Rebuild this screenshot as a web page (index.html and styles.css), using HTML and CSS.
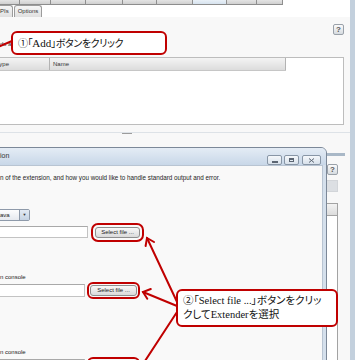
FILE: index.html
```html
<!DOCTYPE html>
<html lang="ja">
<head>
  <meta charset="UTF-8">
  <title>Extender</title>
  <link rel="stylesheet" href="styles.css">
</head>
<body>
  <div class="win">
    <div class="main">
      <div class="tabs-top">
        <span></span><span></span><span></span><span></span><span></span>
        <span></span><span class="on"></span><span></span><span></span>
      </div>
      <div class="tabs-sub">
        <span class="tab first">APIs</span>
        <span class="tab">Options</span>
      </div>
      <div class="rule"></div>
      <div class="panel">
        <div class="help-row"><span class="help">?</span></div>
        <div class="intro">ds a</div>
        <div class="table">
          <div class="thead">
            <div class="th type">Type</div>
            <div class="th name">Name</div>
          </div>
        </div>
        <div class="splitter"><span class="grip"></span></div>
        <div class="lower">
          <div class="rule2"></div>
          <div class="side">
            <span class="help">?</span>
            <span class="sbtn"></span>
            <div class="slist"><div class="slist-head"></div></div>
          </div>
        </div>
      </div>
    </div>
    <div class="stripe"></div>
  </div>

  <div class="dialog">
    <div class="titlebar">
      <span class="title">ion</span>
      <div class="wbtns">
        <span class="wbtn"><i class="ico-min"></i></span>
        <span class="wbtn"><i class="ico-max"></i></span>
        <span class="wbtn wide">
          <svg width="7" height="5" viewBox="0 0 7 5"><path d="M1 0.5 L6 4.5 M6 0.5 L1 4.5" stroke="#5c6673" stroke-width="1"/></svg>
        </span>
      </div>
    </div>
    <div class="content">
      <div class="desc">n of the extension, and how you would like to handle standard output and error.</div>
      <div class="combo"><span class="combo-text">Java</span><span class="combo-arrow">▼</span></div>
      <div class="row r1">
        <span class="field"></span>
        <button class="sel hl">Select file ...</button>
      </div>
      <div class="label l1">n console</div>
      <div class="row r2">
        <span class="field"></span>
        <button class="sel hl">Select file ...</button>
      </div>
      <div class="label l2">n console</div>
      <div class="row r2 r3">
        <span class="field"></span>
        <button class="sel hl">Select file ...</button>
      </div>
    </div>
  </div>

  <svg class="arrows" width="360" height="360" viewBox="0 0 360 360">
    <g stroke="#c00000" stroke-width="2" fill="none" stroke-linecap="round">
      <path d="M12 41 L-2 47"/>
      <path d="M178 304 L147 238"/>
      <path d="M145.6 246 L147 238 L154 242"/>
      <path d="M177 306 L143 292"/>
      <path d="M147.3 298.7 L143 292 L150.8 289"/>
      <path d="M177 312 L143 364"/>
    </g>
  </svg>

  <div class="callout c1">①「<span class="lat">Add</span>」ボタンをクリック</div>
  <div class="callout c2">②「Select file ...」ボタンをクリッ<br>クしてExtenderを選択</div>
</body>
</html>
```

FILE: styles.css
```css
body {
  margin: 0;
  width: 360px;
  height: 360px;
  overflow: hidden;
  position: relative;
  background: #fff;
  font-family: "Liberation Sans", Arial, sans-serif;
  font-size: 6px;
  color: #222;
}
.win {
  display: flex;
  height: 360px;
}
.main {
  width: 350px;
  display: flex;
  flex-direction: column;
}
.stripe {
  width: 5px;
  background: #c3d0dd;
}

/* top tab strip, only its lower edge shows */
.tabs-top {
  display: flex;
  height: 5px;
}
.tabs-top span {
  box-sizing: border-box;
  height: 5px;
  border-right: 1px solid #8f8f8f;
  border-bottom: 1px solid #8d8d8d;
  background: linear-gradient(#e4e4e4, #d0d0d0);
}
.tabs-top span:nth-child(1) { width: 20px; }
.tabs-top span:nth-child(2) { width: 31px; }
.tabs-top span:nth-child(3) { width: 35px; }
.tabs-top span:nth-child(4) { width: 37px; }
.tabs-top span:nth-child(5) { width: 34px; }
.tabs-top span:nth-child(6) { width: 36px; }
.tabs-top span:nth-child(7) { width: 34px; }
.tabs-top span:nth-child(8) { width: 30px; }
.tabs-top span:nth-child(9) { width: 26px; }
.tabs-top span.on {
  background: linear-gradient(#e9f0f7, #d6e2ee);
}

.tabs-sub {
  height: 14px;
  display: flex;
  align-items: flex-end;
  gap: 1px;
}
.tab {
  height: 12px;
  box-sizing: border-box;
  padding: 0 3px;
  line-height: 11px;
  border: 1px solid #9c9c9c;
  border-bottom: none;
  border-radius: 3px 3px 0 0;
  background: linear-gradient(#f6f6f6, #e0e0e0);
  color: #333;
}
.tab.first {
  margin-left: -8px;
}
.rule {
  height: 3px;
  background: #7f8d9c;
}

.panel {
  flex: 1;
  background: #f8f8f8;
  display: flex;
  flex-direction: column;
}
.help-row {
  display: flex;
  justify-content: flex-end;
  padding: 7px 6px 0 0;
}
.help {
  width: 11px;
  height: 11px;
  box-sizing: border-box;
  border: 1px solid #9aa1a9;
  border-radius: 2px;
  background: linear-gradient(#fbfbfb, #d6dbe0);
  color: #555;
  font-size: 8px;
  font-weight: bold;
  line-height: 9px;
  text-align: center;
}
.intro {
  margin-top: 6px;
  height: 6px;
  line-height: 6px;
  color: #333;
}
.table {
  margin: 10px 6px 0 -10px;
  height: 68px;
  box-sizing: border-box;
  border: 1px solid #bdbdbd;
  background: #fff;
}
.thead {
  display: flex;
  width: 295px;
  height: 12px;
  border-bottom: 1px solid #c6c6c6;
}
.th {
  box-sizing: border-box;
  line-height: 12px;
  border-right: 1px solid #b3b3b3;
  background: linear-gradient(#f4f4f4, #dcdcdc);
  color: #333;
}
.th.type {
  width: 59px;
  padding-left: 5px;
}
.th.name {
  flex: 1;
  padding-left: 3px;
}
.splitter {
  height: 16px;
  display: flex;
  align-items: center;
  padding-left: 122px;
  background: linear-gradient(transparent 7px, #dde2e7 7px, #dde2e7 8px, transparent 8px);
}
.grip {
  width: 10px;
  height: 1px;
  background: #9c9c9c;
}
.lower {
  flex: 1;
  display: flex;
  flex-direction: column;
}
.rule2 {
  margin: 12px 5px 0 0;
  height: 3px;
  background: #a9b8c7;
}
.side {
  display: flex;
  flex-direction: column;
  align-items: flex-end;
  padding-right: 12px;
}
.side .help {
  margin-top: 8px;
}
.sbtn {
  margin-top: 5px;
  width: 30px;
  height: 12px;
  box-sizing: border-box;
  border: 1px solid #d2d5d9;
  background: #dcdfe3;
}
.slist {
  margin-top: 11px;
  width: 40px;
  height: 160px;
  box-sizing: border-box;
  border: 1px solid #a3a3a3;
  background: #fff;
}
.slist-head {
  height: 11px;
  border-bottom: 1px solid #a3a3a3;
  background: linear-gradient(#f3f3f3, #dcdcdc);
}

/* dialog window over the main window */
.dialog {
  position: absolute;
  left: -40px;
  top: 147px;
  width: 367px;
  height: 240px;
  box-sizing: border-box;
  border: 1px solid #7c8898;
  border-radius: 6px 6px 0 0;
  background: #d5e0ec;
  padding: 0 3px;
  display: flex;
  flex-direction: column;
}
.titlebar {
  height: 17px;
  margin: 0 -3px;
  padding: 0 5px 0 39px;
  display: flex;
  border-radius: 5px 5px 0 0;
  background: linear-gradient(#e4ecf5, #c8d7e8);
}
.title {
  margin-top: 3px;
  font-size: 7px;
  line-height: 9px;
  color: #333;
}
.wbtns {
  margin-left: auto;
  margin-top: 7px;
  display: flex;
  gap: 2px;
}
.wbtn {
  width: 15px;
  height: 10px;
  box-sizing: border-box;
  border: 1px solid #8896a6;
  border-radius: 2px;
  background: linear-gradient(#f5f8fb, #d8e1eb);
  display: flex;
  align-items: center;
  justify-content: center;
}
.wbtn.wide {
  width: 19px;
  margin-left: 1px;
}
.ico-min {
  width: 6px;
  height: 2px;
  margin-top: 3px;
  background: #5c6673;
}
.ico-max {
  width: 5px;
  height: 4px;
  box-sizing: border-box;
  border: 1px solid #5c6673;
  border-top-width: 2px;
}
.content {
  flex: 1;
  background: #f9f9f9;
  border: 1px solid #b8c4d2;
  padding: 8px 0 0 35px;
}
.desc {
  font-size: 6.3px;
  line-height: 7px;
  white-space: nowrap;
  color: #222;
}
.combo {
  margin: 28px 0 0 -20px;
  width: 50px;
  height: 12px;
  box-sizing: border-box;
  display: flex;
  border: 1px solid #8e9aaa;
  border-radius: 2px;
  background: linear-gradient(#fdfdfd, #e6e9ee);
}
.combo-text {
  flex: 1;
  padding-left: 16px;
  line-height: 10px;
}
.combo-arrow {
  width: 9px;
  border-left: 1px solid #8e9aaa;
  background: linear-gradient(#e3ebf4, #c5d3e3);
  font-size: 4px;
  line-height: 10px;
  text-align: center;
  color: #333;
}
.row {
  display: flex;
  align-items: center;
  margin-left: -20px;
}
.field {
  box-sizing: border-box;
  height: 12px;
  border: 1px solid #c3c3c3;
  border-top-color: #a9a9a9;
  background: #fff;
}
.sel {
  height: 11px;
  box-sizing: border-box;
  padding: 0;
  font-family: inherit;
  font-size: 6px;
  line-height: 9px;
  color: #222;
  border: 1px solid #8e8e8e;
  border-radius: 3px;
  background: linear-gradient(#f8f8f8, #dadada);
}
.sel.hl {
  outline: 2px solid #c00000;
  outline-offset: 2px;
}
.r1 {
  margin-top: 5px;
  gap: 7px;
}
.r1 .field {
  width: 108px;
}
.r1 .sel {
  width: 45px;
}
.r2 {
  margin-top: 3px;
  gap: 5px;
}
.r2 .field {
  width: 105px;
  height: 13px;
}
.r2 .sel {
  width: 47px;
}
.r2 .sel.hl {
  outline-offset: 1px;
}
.label {
  line-height: 7px;
  color: #222;
}
.l1 {
  margin-top: 36px;
}
.l2 {
  margin-top: 52px;
}

/* annotations */
.arrows {
  position: absolute;
  left: 0;
  top: 0;
}
.callout {
  position: absolute;
  box-sizing: border-box;
  border: 2px solid #c00000;
  border-radius: 6px;
  background: #fff;
  color: #111;
  font-family: "Liberation Serif", "Noto Sans CJK JP", serif;
  font-feature-settings: "palt";
  font-size: 10.5px;
  white-space: nowrap;
}
.c1 {
  left: 11px;
  top: 31px;
  width: 156px;
  height: 24px;
  padding-left: 5px;
  font-size: 10px;
  letter-spacing: -0.4px;
  line-height: 20px;
}
.c1 .lat {
  font-size: 11px;
  letter-spacing: 0;
}
.c2 {
  left: 176px;
  top: 289px;
  width: 162px;
  height: 38px;
  padding: 3px 0 0 5px;
  line-height: 14px;
}
```
